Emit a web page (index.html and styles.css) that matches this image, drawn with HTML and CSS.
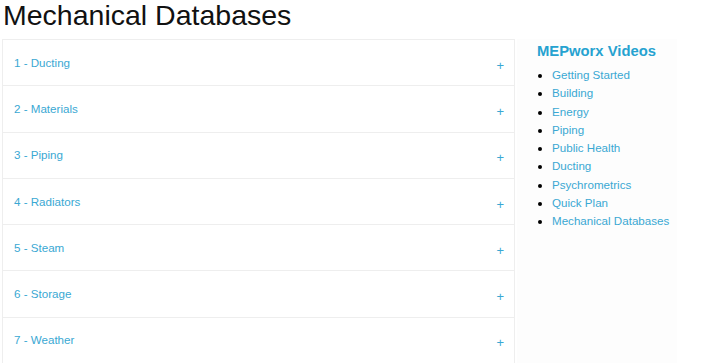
FILE: index.html
```html
<!DOCTYPE html>
<html lang="en">
<head>
    <meta charset="UTF-8">
    <meta name="viewport" content="width=device-width, initial-scale=1.0">
    <title>Mechanical Databases</title>
    <link rel="stylesheet" href="styles.css">
</head>
<body>

    <h1 class="page-title">Mechanical Databases</h1>

    <div class="row">
        <div class="main-col">
            <div class="panel-group">
                <div class="panel"><a href="#">1 - Ducting</a><span class="plus">+</span></div>
                <div class="panel"><a href="#">2 - Materials</a><span class="plus">+</span></div>
                <div class="panel"><a href="#">3 - Piping</a><span class="plus">+</span></div>
                <div class="panel"><a href="#">4 - Radiators</a><span class="plus">+</span></div>
                <div class="panel"><a href="#">5 - Steam</a><span class="plus">+</span></div>
                <div class="panel"><a href="#">6 - Storage</a><span class="plus">+</span></div>
                <div class="panel"><a href="#">7 - Weather</a><span class="plus">+</span></div>
            </div>
        </div>

        <div class="side-col">
            <h3 class="side-title">MEPworx Videos</h3>
            <ul class="video-list">
                <li><a href="#">Getting Started</a></li>
                <li><a href="#">Building</a></li>
                <li><a href="#">Energy</a></li>
                <li><a href="#">Piping</a></li>
                <li><a href="#">Public Health</a></li>
                <li><a href="#">Ducting</a></li>
                <li><a href="#">Psychrometrics</a></li>
                <li><a href="#">Quick Plan</a></li>
                <li><a href="#">Mechanical Databases</a></li>
            </ul>
        </div>
    </div>

</body>
</html>
```

FILE: styles.css
```css
body {
    font-family: 'Liberation Sans', Arial, sans-serif;
    font-size: 11.6px;
    background-color: #fff;
    color: #333;
    margin: 0;
    padding: 0 0 0 2px;
}

a {
    color: #3aa8d3;
    text-decoration: none;
}

.page-title {
    font-size: 28.5px;
    font-weight: normal;
    color: #111;
    margin: 0 0 0 1px;
    line-height: 31px;
    height: 39px;
}

.row {
    display: flex;
    align-items: stretch;
}

.main-col {
    width: 513px;
}

.panel-group {
    border: 1px solid #eee;
    border-bottom: none;
}

.panel {
    height: 45.3px;
    border-bottom: 1px solid #eee;
    display: flex;
    align-items: center;
    justify-content: space-between;
    padding: 0 10px 0 11px;
}

.panel a {
    margin-top: -1px;
}

.plus {
    color: #3aa8d3;
    font-size: 13px;
    margin-top: 5px;
}

.side-col {
    margin-left: 2px;
    padding-left: 20px;
    width: 140px;
    background-color: #fdfdfd;
}

.side-title {
    color: #26a2d0;
    font-size: 14.8px;
    font-weight: bold;
    margin: 2px 0 0 0;
    line-height: 20px;
}

.video-list {
    margin: 5px 0 0 0;
    padding-left: 15px;
}

.video-list li {
    line-height: 18.3px;
    color: #000;
}
```
